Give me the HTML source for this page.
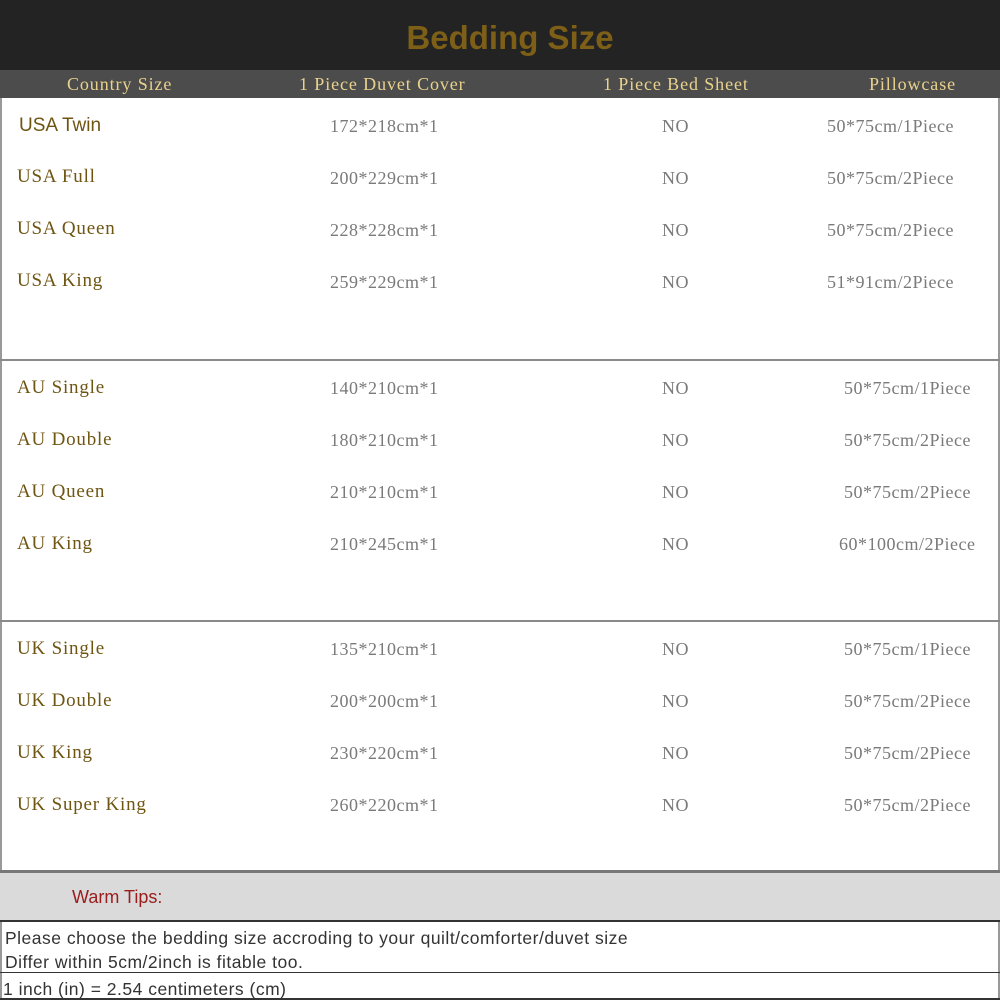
<!DOCTYPE html>
<html><head><style>
body{margin:0;width:1000px;height:1000px;position:relative;background:#fff;overflow:hidden;font-family:"Liberation Serif",serif}
div{position:absolute}
.t{white-space:nowrap}
.h{color:#e9d28c;font-size:18px;top:74px;letter-spacing:0.9px}
.n{color:#6e5512;font-size:19px;left:17px;letter-spacing:0.8px}
.v{color:#7a7a7a;font-size:18px;letter-spacing:0.5px}
.ln{left:0;width:1000px;height:2px;background:#8a8a8a}
.s{font-family:"Liberation Sans",sans-serif;color:#333;font-size:17.5px;left:5px;letter-spacing:0.5px}
</style></head><body>
<div style="left:0;top:0;width:1000px;height:70px;background:#232323"></div>
<div class="t" style="left:0;width:1000px;top:19px;text-align:center;font-family:'Liberation Sans',sans-serif;font-size:33px;font-weight:bold;color:#7d5f17;padding-left:10px">Bedding Size</div>
<div style="left:0;top:70px;width:1000px;height:28px;background:#4c4c4c"></div>
<div class="t h" style="left:67px">Country Size</div>
<div class="t h" style="left:299px">1 Piece Duvet Cover</div>
<div class="t h" style="left:603px">1 Piece Bed Sheet</div>
<div class="t h" style="left:869px">Pillowcase</div>
<div style="left:0;top:98px;width:2px;height:900px;background:#999"></div>
<div style="left:998px;top:98px;width:2px;height:900px;background:#999"></div>

<div class="t n" style="top:115px;left:19px;font-family:'Liberation Sans',sans-serif;font-size:19px;letter-spacing:0">USA Twin</div>
<div class="t n" style="top:166px">USA Full</div>
<div class="t n" style="top:218px">USA Queen</div>
<div class="t n" style="top:270px">USA King</div>
<div class="t v" style="top:116px;left:330px">172*218cm*1</div>
<div class="t v" style="top:168px;left:330px">200*229cm*1</div>
<div class="t v" style="top:220px;left:330px">228*228cm*1</div>
<div class="t v" style="top:272px;left:330px">259*229cm*1</div>
<div class="t v" style="top:116px;left:662px">NO</div>
<div class="t v" style="top:168px;left:662px">NO</div>
<div class="t v" style="top:220px;left:662px">NO</div>
<div class="t v" style="top:272px;left:662px">NO</div>
<div class="t v" style="top:116px;left:827px">50*75cm/1Piece</div>
<div class="t v" style="top:168px;left:827px">50*75cm/2Piece</div>
<div class="t v" style="top:220px;left:827px">50*75cm/2Piece</div>
<div class="t v" style="top:272px;left:827px">51*91cm/2Piece</div>
<div class="ln" style="top:359px"></div>

<div class="t n" style="top:377px">AU Single</div>
<div class="t n" style="top:429px">AU Double</div>
<div class="t n" style="top:481px">AU Queen</div>
<div class="t n" style="top:533px">AU King</div>
<div class="t v" style="top:378px;left:330px">140*210cm*1</div>
<div class="t v" style="top:430px;left:330px">180*210cm*1</div>
<div class="t v" style="top:482px;left:330px">210*210cm*1</div>
<div class="t v" style="top:534px;left:330px">210*245cm*1</div>
<div class="t v" style="top:378px;left:662px">NO</div>
<div class="t v" style="top:430px;left:662px">NO</div>
<div class="t v" style="top:482px;left:662px">NO</div>
<div class="t v" style="top:534px;left:662px">NO</div>
<div class="t v" style="top:378px;left:844px">50*75cm/1Piece</div>
<div class="t v" style="top:430px;left:844px">50*75cm/2Piece</div>
<div class="t v" style="top:482px;left:844px">50*75cm/2Piece</div>
<div class="t v" style="top:534px;left:839px">60*100cm/2Piece</div>
<div class="ln" style="top:620px"></div>

<div class="t n" style="top:638px">UK Single</div>
<div class="t n" style="top:690px">UK Double</div>
<div class="t n" style="top:742px">UK King</div>
<div class="t n" style="top:794px">UK Super King</div>
<div class="t v" style="top:639px;left:330px">135*210cm*1</div>
<div class="t v" style="top:691px;left:330px">200*200cm*1</div>
<div class="t v" style="top:743px;left:330px">230*220cm*1</div>
<div class="t v" style="top:795px;left:330px">260*220cm*1</div>
<div class="t v" style="top:639px;left:662px">NO</div>
<div class="t v" style="top:691px;left:662px">NO</div>
<div class="t v" style="top:743px;left:662px">NO</div>
<div class="t v" style="top:795px;left:662px">NO</div>
<div class="t v" style="top:639px;left:844px">50*75cm/1Piece</div>
<div class="t v" style="top:691px;left:844px">50*75cm/2Piece</div>
<div class="t v" style="top:743px;left:844px">50*75cm/2Piece</div>
<div class="t v" style="top:795px;left:844px">50*75cm/2Piece</div>

<div class="ln" style="top:870px;height:3px;background:#777"></div>
<div style="left:0;top:873px;width:1000px;height:48px;background:#dadada"></div>
<div class="t" style="left:72px;top:887px;font-family:'Liberation Sans',sans-serif;font-size:18px;color:#9b1c1c">Warm Tips:</div>
<div style="left:0;top:920px;width:1000px;height:2px;background:#333"></div>
<div class="t s" style="top:928px">Please choose the bedding size accroding to your quilt/comforter/duvet size</div>
<div class="t s" style="top:952px">Differ within 5cm/2inch is fitable too.</div>
<div style="left:0;top:972px;width:1000px;height:1px;background:#333"></div>
<div class="t s" style="top:979px;left:3px">1 inch (in) = 2.54 centimeters (cm)</div>
<div style="left:0;top:998px;width:1000px;height:2px;background:#333"></div>
</body></html>
